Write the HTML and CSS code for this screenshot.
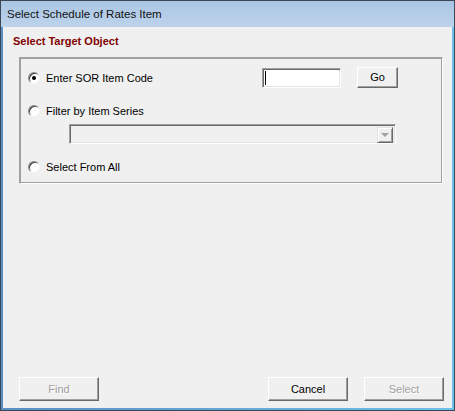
FILE: index.html
```html
<!DOCTYPE html>
<html lang="en">
  <head>
    <meta charset="UTF-8" />
    <title>Select Schedule of Rates Item</title>
    <link rel="stylesheet" href="styles.css">
  </head>
  <body>
    <div class="window">
      <!-- Title bar -->
      <div class="titlebar">Select Schedule of Rates Item</div>

      <div class="client">
        <h3 class="section-title">Select Target Object</h3>

        <!-- Option group -->
        <div class="group">
          <div class="row row-first">
            <span class="radio checked"></span>
            <span class="label label-code">Enter SOR Item Code</span>
            <span class="textbox"><span class="caret"></span></span>
            <span class="btn btn-go">Go</span>
          </div>

          <div class="row row-second">
            <span class="radio"></span>
            <span class="label">Filter by Item Series</span>
          </div>
          <div class="combo">
            <span class="combo-btn"><span class="arrow"></span></span>
          </div>

          <div class="row row-third">
            <span class="radio"></span>
            <span class="label">Select From All</span>
          </div>
        </div>

        <!-- Dialog buttons -->
        <div class="buttons">
          <span class="btn btn-wide disabled">Find</span>
          <span class="spacer"></span>
          <span class="btn btn-wide">Cancel</span>
          <span class="btn btn-wide disabled">Select</span>
        </div>
      </div>
    </div>
  </body>
</html>
```

FILE: styles.css
```css
/* Page */
body {
  margin: 0;
  font-family: "Liberation Sans", Arial, sans-serif;
  font-size: 11px;
  color: #000;
}

/* Window frame */
.window {
  width: 455px;
  height: 411px;
  box-sizing: border-box;
  border: 1px solid #3b4756;
  background: linear-gradient(to right, #5a8fc4, #6cc2e8);
  display: flex;
  flex-direction: column;
}

.titlebar {
  height: 26px;
  flex: none;
  display: flex;
  align-items: center;
  padding-left: 6px;
  padding-bottom: 1px;
  box-sizing: border-box;
  font-size: 11.5px;
  color: #111;
  background: linear-gradient(#aac6e4, #bdd3eb);
}

.client {
  flex: 1;
  margin: 0 2px 2px 2px;
  background: #f0f0f0;
  display: flex;
  flex-direction: column;
}

/* Heading */
.section-title {
  margin: 7px 0 0 10px;
  height: 14px;
  line-height: 14px;
  font-size: 11px;
  font-weight: bold;
  color: #800000;
}

/* Group box */
.group {
  margin: 9px 0 0 16px;
  width: 424px;
  height: 127px;
  box-sizing: border-box;
  border: 1px solid;
  border-color: #a0a0a0 #fff #fff #a0a0a0;
  box-shadow: 1px 1px 0 #a0a0a0 inset, -1px -1px 0 #a0a0a0 inset;
  padding: 9px 0 0 8px;
}

.row {
  display: flex;
  align-items: center;
}

.row-first {
  height: 21px;
}

.row-second {
  height: 14px;
  margin-top: 16px;
}

.row-third {
  height: 14px;
  margin-top: 16px;
}

.label {
  margin-left: 6px;
  white-space: nowrap;
}

.label-code {
  width: 216px;
  flex: none;
}

/* Radio buttons */
.radio {
  width: 12px;
  height: 12px;
  box-sizing: border-box;
  border-radius: 50%;
  border: 1px solid;
  border-color: #8a8a8a #f4f4f4 #f4f4f4 #8a8a8a;
  background: #fff;
  box-shadow: 1px 1px 0 #404040 inset;
  position: relative;
  flex: none;
}

.radio.checked::after {
  content: "";
  position: absolute;
  left: 3px;
  top: 3px;
  width: 4px;
  height: 4px;
  border-radius: 50%;
  background: #000;
}

/* Text box */
.textbox {
  width: 79px;
  height: 20px;
  box-sizing: border-box;
  background: #fff;
  border: 1px solid;
  border-color: #a0a0a0 #fff #fff #a0a0a0;
  box-shadow: 1px 1px 0 #696969 inset, -1px -1px 0 #e3e3e3 inset;
  position: relative;
}

.caret {
  position: absolute;
  left: 2px;
  top: 2px;
  width: 1px;
  height: 14px;
  background: #000;
}

/* Buttons */
.btn {
  display: flex;
  align-items: center;
  justify-content: center;
  box-sizing: border-box;
  background: #f0f0f0;
  border: 1px solid;
  border-color: #fff #696969 #696969 #fff;
  box-shadow: -1px -1px 0 #a0a0a0 inset;
  padding-bottom: 1px;
}

.btn-go {
  margin-left: 16px;
  width: 41px;
  height: 21px;
}

.btn-wide {
  width: 80px;
  height: 24px;
}

.btn.disabled {
  color: #a0a0a0;
  text-shadow: 1px 1px 0 #fff;
}

/* Combo box */
.combo {
  margin: 6px 0 0 41px;
  width: 327px;
  height: 20px;
  box-sizing: border-box;
  border: 1px solid;
  border-color: #a0a0a0 #fff #fff #a0a0a0;
  box-shadow: 1px 1px 0 #696969 inset, -1px -1px 0 #e3e3e3 inset;
  display: flex;
  justify-content: flex-end;
  padding: 2px;
}

.combo-btn {
  width: 16px;
  height: 16px;
  box-sizing: border-box;
  border: 1px solid;
  border-color: #e3e3e3 #696969 #696969 #e3e3e3;
  box-shadow: 1px 1px 0 #fff inset, -1px -1px 0 #a0a0a0 inset;
  display: flex;
  align-items: center;
  justify-content: center;
}

.arrow {
  width: 0;
  height: 0;
  border-left: 4px solid transparent;
  border-right: 4px solid transparent;
  border-top: 4px solid #a0a0a0;
}

/* Bottom buttons */
.buttons {
  margin-top: auto;
  display: flex;
  gap: 16px;
  padding: 0 8px 7px 16px;
}

.spacer {
  flex: 1;
}
```
